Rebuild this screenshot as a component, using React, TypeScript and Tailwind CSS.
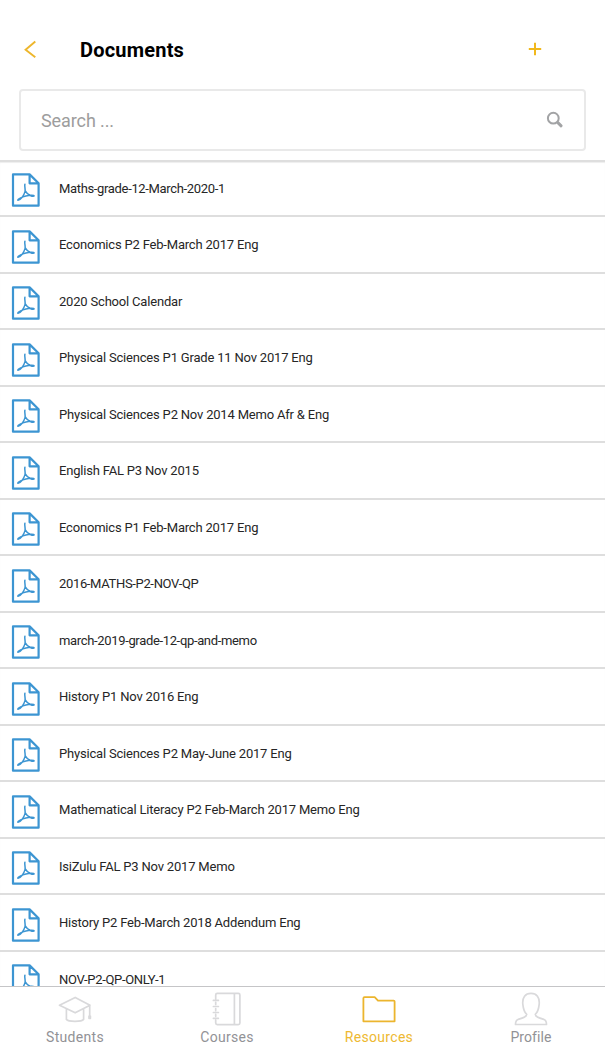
import React from "react";

const documents = [
  "Maths-grade-12-March-2020-1",
  "Economics P2 Feb-March 2017 Eng",
  "2020 School Calendar",
  "Physical Sciences P1 Grade 11 Nov 2017 Eng",
  "Physical Sciences P2 Nov 2014 Memo Afr & Eng",
  "English FAL P3 Nov 2015",
  "Economics P1 Feb-March 2017 Eng",
  "2016-MATHS-P2-NOV-QP",
  "march-2019-grade-12-qp-and-memo",
  "History P1 Nov 2016 Eng",
  "Physical Sciences P2 May-June 2017 Eng",
  "Mathematical Literacy P2 Feb-March 2017 Memo Eng",
  "IsiZulu FAL P3 Nov 2017 Memo",
  "History P2 Feb-March 2018 Addendum Eng",
  "NOV-P2-QP-ONLY-1",
];

function PdfIcon() {
  return (
    <svg width="30" height="36" viewBox="0 0 30 36" fill="none" stroke="#3c95d2" strokeLinejoin="round" strokeLinecap="round" className="shrink-0">
      <path strokeWidth="2.2" d="M18.6 2.4H2V33.7H27.6V11.3L18.6 2.4V11.3H27.6" />
      <path strokeWidth="1.5" d="M13.9 12.2C13.3 14.4 14.6 17 14 19.6C12.9 23.4 9.8 28.4 6.9 28.2C6.2 27.2 11 24.9 14.9 24C18.6 23.1 23 22.9 23.2 23.9C22.3 25.2 16.6 23.2 14.3 18.8" />
    </svg>
  );
}

function CapIcon() {
  return (
    <svg width="34" height="34" viewBox="0 0 34 34" fill="none" stroke="#d9d9db" strokeWidth="1.7" strokeLinejoin="round" strokeLinecap="round">
      <path d="M1.5 13.2L17.2 5.4L32 13.2L17.2 20.8ZM8.4 17.2V27.4C10.5 30 23.5 30 25.6 27.4V17.2M31.7 13.5V24M31 24H32.4V26.3H31Z" />
    </svg>
  );
}

function NotebookIcon() {
  return (
    <svg width="34" height="34" viewBox="0 0 34 34" fill="none" stroke="#d9d9db" strokeWidth="1.7" strokeLinejoin="round" strokeLinecap="round">
      <path d="M5.7 6V3Q5.7 1.4 7.3 1.4H28.3Q29.9 1.4 29.9 3V31Q29.9 32.6 28.3 32.6H7.3Q5.7 32.6 5.7 31V28M5.7 6V6.8M5.7 10.3V12.4M5.7 16.5V18.6M5.7 22.4V24.3M24.4 1.4V32.6M3.4 8.4H8.4M3.4 14.5H8.4M3.4 20.5H8.4M3.4 26.3H8.4" />
    </svg>
  );
}

function FolderIcon() {
  return (
    <svg width="34" height="34" viewBox="0 0 34 34" fill="none" stroke="#ecb52e" strokeWidth="1.8" strokeLinejoin="round">
      <path d="M1.4 29.3V6.3Q1.4 5.2 2.5 5.2H12.7L16 8.6H31.7Q32.6 8.6 32.6 9.5V29.3Z" />
    </svg>
  );
}

function ProfileIcon() {
  return (
    <svg width="34" height="34" viewBox="0 0 34 34" fill="none" stroke="#d9d9db" strokeWidth="1.7" strokeLinejoin="round">
      <path d="M12.7 22.3C10.4 20.3 9.2 16.1 8.8 12.1C8.2 5.3 11.3 1.4 17 1.4C22.7 1.4 25.8 5.3 25.2 12.1C24.8 16.1 23.6 20.3 21.3 22.3C21.8 25 24.5 25.8 30 27.5C31.7 28.1 32.5 29.5 32.5 32.5H1.5C1.5 29.5 2.3 28.1 4 27.5C9.5 25.8 12.2 25 12.7 22.3Z" />
    </svg>
  );
}

const tabs = [
  { label: "Students", icon: <CapIcon />, className: "tracking-[0.3px] text-[#929296]" },
  { label: "Courses", icon: <NotebookIcon />, className: "tracking-[0.3px] text-[#929296]" },
  { label: "Resources", icon: <FolderIcon />, className: "tracking-[0.3px] text-[#eeb932]" },
  { label: "Profile", icon: <ProfileIcon />, className: "tracking-[0.1px] text-[#929296]" },
];

export default function App() {
  return (
    <div className="flex h-[1048px] w-[605px] flex-col overflow-hidden bg-white font-['Roboto',sans-serif]">
      <header className="h-[160px] shrink-0 px-[19px] pt-[29px]">
        <div className="flex h-10 items-center pr-[44px]">
          <button aria-label="Back" className="w-[61px] pl-[4px]">
            <svg width="16" height="20" viewBox="0 0 16 20" fill="none" stroke="#edb62c" strokeWidth="1.9">
              <path d="M12.3 2.6L2.6 10.7L12.3 18.3" />
            </svg>
          </button>
          <h1 className="grow pt-[2px] text-[20px] font-bold leading-6 tracking-[0.2px] text-black">Documents</h1>
          <button aria-label="Add">
            <svg width="14" height="14" viewBox="0 0 14 14" fill="none" stroke="#f1b81c" strokeWidth="2">
              <path d="M7 .8V13.2M.8 7H13.2" />
            </svg>
          </button>
        </div>
        <div className="mt-[20px] flex h-[61.5px] w-[567px] items-center justify-between rounded-[4px] border-2 border-[#e9e9e9] pl-[20px] pr-[20px]">
          <span className="pt-[2px] text-[18px] leading-6 tracking-[-0.1px] text-[#9d9d9d]">Search ...</span>
          <svg width="18" height="18" viewBox="0 0 18 18" fill="none" stroke="#a2a3a5">
            <circle cx="7.3" cy="7.2" r="5.4" strokeWidth="2" />
            <path strokeWidth="3" strokeLinecap="round" d="M12.1 11.9L15.1 14.8" />
          </svg>
        </div>
      </header>
      <main className="min-h-0 grow overflow-hidden border-t-2 border-[#dedede] shadow-[inset_0_1px_1px_#eeeeee]">
        {documents.map((name, index) => (
          <div
            key={name}
            className={`flex items-start border-b-2 border-[#dedede] pl-[11px] ${index === 0 ? "h-[55px] pt-[10px]" : "h-[56.54px] pt-[11.5px]"}`}
          >
            <PdfIcon />
            <span
              className={`ml-[18px] mt-[6.5px] text-[13px] leading-5 text-[#262626] ${name.includes(" ") ? "tracking-[-0.19px]" : "tracking-[-0.34px]"}`}
            >
              {name}
            </span>
          </div>
        ))}
      </main>
      <nav className="-ml-[1px] grid h-[62px] w-[608px] shrink-0 grid-cols-4 border-t border-[#c5c5c7] bg-white">
        {tabs.map((tab) => (
          <div key={tab.label} className="flex flex-col items-center pt-[5px]">
            {tab.icon}
            <span className={`mt-px text-[14px] leading-5 ${tab.className}`}>{tab.label}</span>
          </div>
        ))}
      </nav>
    </div>
  );
}
